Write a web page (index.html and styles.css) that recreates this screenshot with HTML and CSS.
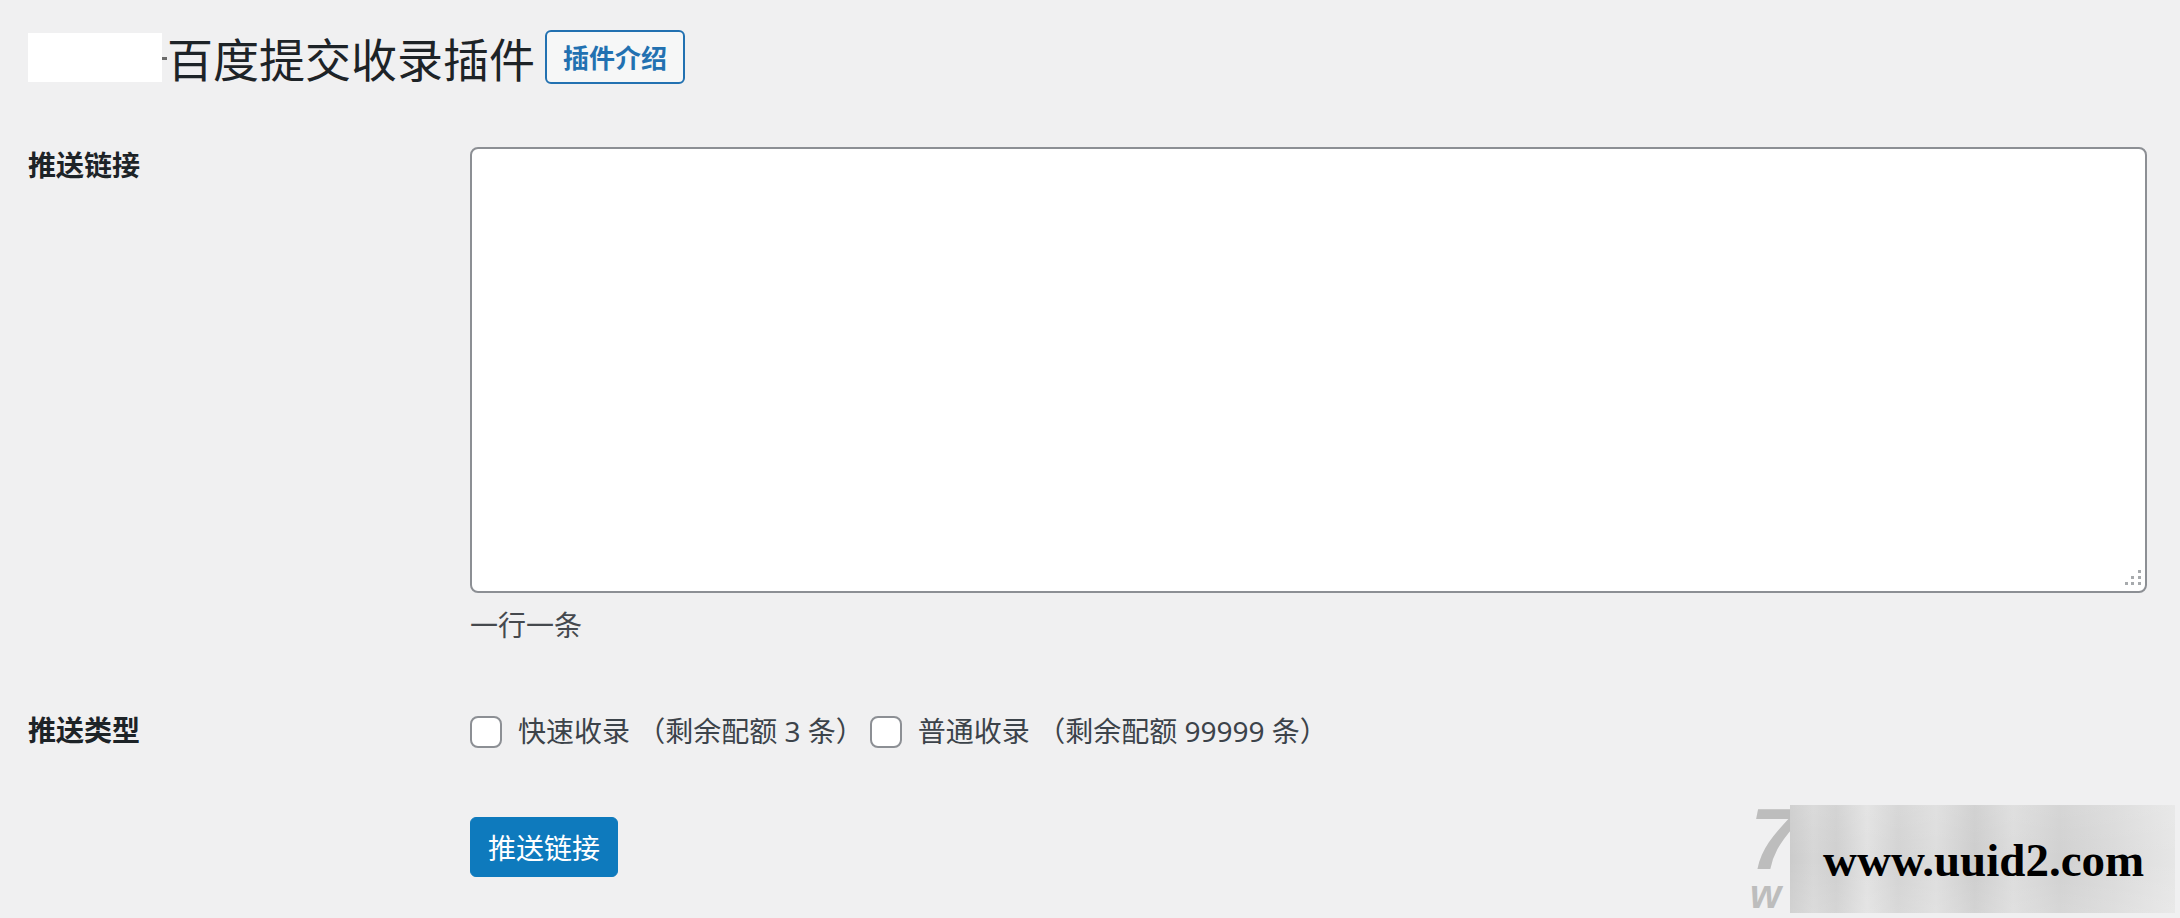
FILE: index.html
```html
<!DOCTYPE html>
<html lang="zh-CN">
<head>
<meta charset="utf-8">
<title>百度提交收录插件</title>
<link rel="stylesheet" href="styles.css">
</head>
<body>
<div class="wrap">
  <h1 class="page-title">
    <span class="redact"></span><span class="redact-tail"></span><span class="title-text">百度提交收录插件</span><a class="title-action" href="#">插件介绍</a>
  </h1>
  <div class="form">
    <div class="row row-links">
      <div class="label">推送链接</div>
      <div class="field">
        <div class="ta-wrap">
          <textarea class="links"></textarea>
          <svg class="grip" width="20" height="20" viewBox="0 0 20 20">
            <rect x="15" y="1" width="3" height="3" fill="#a7aaad"/>
            <rect x="8" y="7" width="3" height="3" fill="#a7aaad"/>
            <rect x="15" y="7" width="3" height="3" fill="#a7aaad"/>
            <rect x="2" y="13" width="3" height="3" fill="#a7aaad"/>
            <rect x="8" y="13" width="3" height="3" fill="#a7aaad"/>
            <rect x="15" y="13" width="3" height="3" fill="#a7aaad"/>
          </svg>
        </div>
        <p class="desc">一行一条</p>
      </div>
    </div>
    <div class="row row-type">
      <div class="label">推送类型</div>
      <div class="field checks">
        <label class="check"><input type="checkbox" class="box">快速收录 （剩余配额 3 条）</label>
        <label class="check"><input type="checkbox" class="box">普通收录 （剩余配额 99999 条）</label>
      </div>
    </div>
    <div class="row row-submit">
      <div class="label"></div>
      <div class="field">
        <button class="primary" type="button">推送链接</button>
      </div>
    </div>
  </div>
</div>
<div class="watermark">
  <div class="wm-back">
    <span class="wm-seven">7</span>
    <span class="wm-w">w</span>
  </div>
  <div class="wm-box"><span class="wm-text">www.uuid2.com</span></div>
</div>
</body>
</html>
```
FILE: styles.css
```css
html, body {
  margin: 0;
  padding: 0;
  background: #f0f0f1;
  overflow: hidden;
}
body {
  font-family: "Noto Sans", "Noto Sans CJK SC", sans-serif;
  color: #3c434a;
  width: 2180px;
  height: 918px;
  position: relative;
}
.wrap {
  padding: 30px 0 0 28px;
}
.page-title {
  display: flex;
  align-items: center;
  height: 54px;
  margin: 0;
  font-weight: 400;
}
.redact {
  display: inline-block;
  width: 134px;
  height: 49px;
  background: #ffffff;
}
.redact-tail {
  display: inline-block;
  width: 5px;
  height: 3px;
  background: #6b6b6b;
  margin-top: 2px;
}
.title-text {
  font-family: "Noto Sans CJK SC", sans-serif;
  font-size: 46px;
  line-height: 54px;
  color: #1d2327;
}
.title-action {
  margin-left: 10px;
  box-sizing: border-box;
  height: 54px;
  padding: 0 16px;
  border: 2px solid #2271b1;
  border-radius: 6px;
  background: #f6f7f7;
  color: #2271b1;
  font-family: "Noto Sans CJK SC", sans-serif;
  font-size: 26px;
  font-weight: 700;
  line-height: 50px;
  text-decoration: none;
}
.form {
  display: flex;
  flex-direction: column;
}
.row {
  display: grid;
  grid-template-columns: 442px 1677px;
}
.row-links {
  margin-top: 63px;
}
.row-type {
  margin-top: 67px;
}
.row-submit {
  margin-top: 66px;
}
.label {
  font-family: "Noto Sans CJK SC", sans-serif;
  font-size: 28px;
  font-weight: 700;
  line-height: 40px;
  color: #1d2327;
  margin-top: -3px;
}
.row-type .label {
  margin-top: -2px;
}
.ta-wrap {
  position: relative;
}
.links {
  display: block;
  box-sizing: border-box;
  width: 1677px;
  height: 446px;
  margin: 0;
  border: 2px solid #8c8f94;
  border-radius: 8px;
  background: #ffffff;
  resize: none;
  outline: none;
}
.grip {
  position: absolute;
  right: 4px;
  bottom: 4px;
}
.desc {
  margin: 11px 0 0;
  font-family: "Noto Sans CJK SC", sans-serif;
  font-size: 28px;
  line-height: 40px;
  color: #45494e;
}
.checks {
  display: flex;
  align-items: center;
  height: 40px;
}
.check {
  display: flex;
  align-items: center;
  margin-right: 6px;
  font-family: "Noto Sans", "Noto Sans CJK SC", sans-serif;
  font-size: 28px;
  line-height: 40px;
  color: #3c434a;
  white-space: pre;
}
.box {
  appearance: none;
  -webkit-appearance: none;
  box-sizing: border-box;
  width: 32px;
  height: 32px;
  margin: 2px 16px 0 0;
  border: 2px solid #8c8f94;
  border-radius: 8px;
  background: #ffffff;
}
.primary {
  box-sizing: border-box;
  height: 60px;
  padding: 0 17px;
  border: 1px solid #0e7abd;
  border-radius: 6px;
  background: #0e7abd;
  color: #ffffff;
  font-family: "Noto Sans CJK SC", sans-serif;
  font-size: 28px;
  line-height: 56px;
  cursor: pointer;
}
.watermark {
  position: absolute;
  left: 1748px;
  top: 805px;
  width: 430px;
  height: 110px;
}
.wm-back {
  position: absolute;
  left: 0;
  top: 0;
  width: 42px;
  height: 108px;
  overflow: hidden;
}
.wm-seven {
  position: absolute;
  left: 2px;
  top: -10px;
  font-family: "Liberation Sans", sans-serif;
  font-style: italic;
  font-weight: 700;
  font-size: 88px;
  line-height: 88px;
  color: #bdbdbd;
}
.wm-w {
  position: absolute;
  left: 2px;
  top: 69px;
  font-family: "Liberation Sans", sans-serif;
  font-style: italic;
  font-weight: 700;
  font-size: 40px;
  line-height: 40px;
  color: #bdbdbd;
}
.wm-box {
  position: absolute;
  left: 42px;
  top: 0;
  width: 385px;
  height: 108px;
  box-sizing: border-box;
  padding: 32px 0 0 33px;
  background:
    linear-gradient(180deg, rgba(255,255,255,0.10) 0%, rgba(255,255,255,0) 50%, rgba(255,255,255,0.12) 100%),
    linear-gradient(90deg, #cbcbcb 0%, #d6d6d6 6%, #cfcfcf 12%, #e1e1e1 20%, #d3d3d3 28%, #dddddd 38%, #cdcdcd 48%, #dcdcdc 58%, #d1d1d1 70%, #dadada 84%, #e6e6e6 100%);
}
.wm-text {
  font-family: "Liberation Serif", serif;
  font-weight: 700;
  font-size: 47px;
  line-height: 47px;
  color: #000000;
}
```
